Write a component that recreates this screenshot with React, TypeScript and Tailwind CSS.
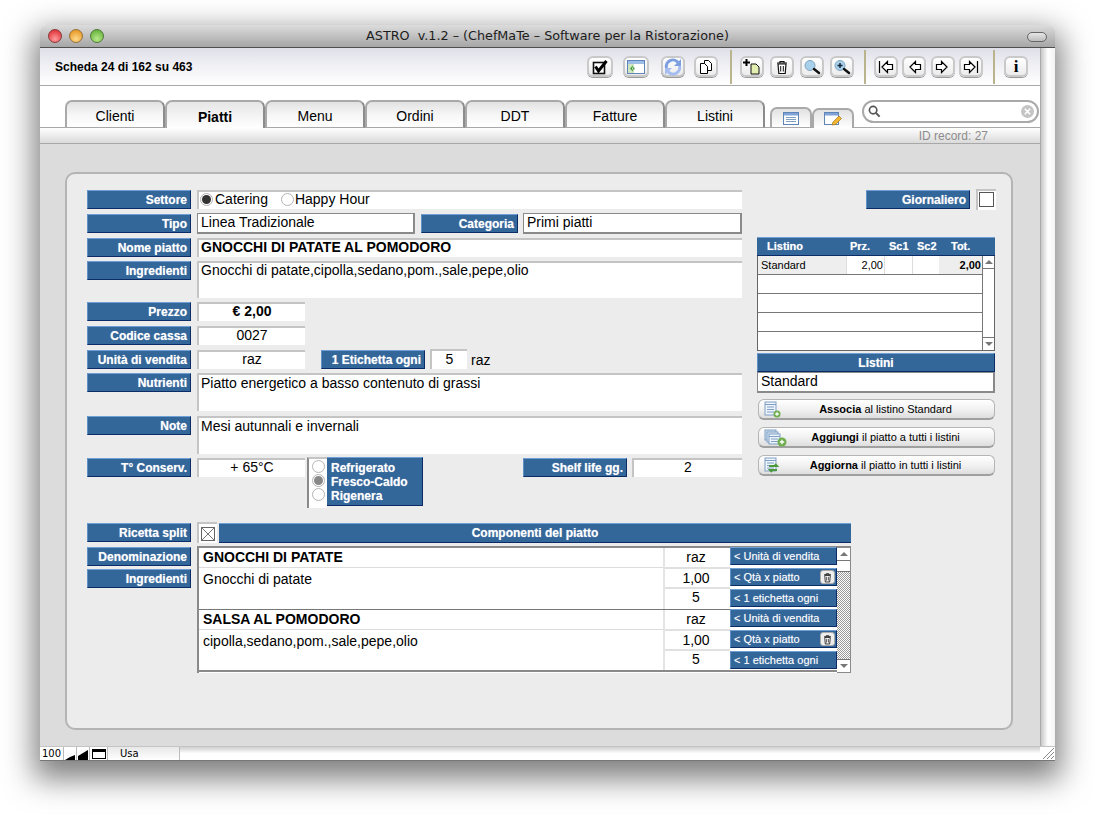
import type { ReactNode } from "react";

const tabs = ["Clienti", "Piatti", "Menu", "Ordini", "DDT", "Fatture", "Listini"];

function Label({ children, className = "w-[104px]" }: { children: ReactNode; className?: string }) {
  return (
    <div
      className={`flex h-[19px] shrink-0 items-center justify-end border-t border-l border-t-[#6f9fd4] border-l-[#5f8fc4] border-b border-r border-b-[#0b2c66] border-r-[#0b2c66] bg-[#336699] pr-[3px] text-[12px] font-bold whitespace-nowrap text-white [text-shadow:0_0_1px_rgba(255,255,255,0.55)] ${className}`}
    >
      {children}
    </div>
  );
}

function Inset({ children, className = "" }: { children?: ReactNode; className?: string }) {
  return (
    <div className={`border-t-2 border-l-2 border-t-[#c4c4c4] border-l-[#c4c4c4] bg-white text-[14px] leading-[15px] text-black ${className}`}>
      {children}
    </div>
  );
}

function Boxed({ children, className = "" }: { children?: ReactNode; className?: string }) {
  return (
    <div className={`border border-r-2 border-b-2 border-[#8a8a8a] bg-white pl-[3px] text-[14px] leading-[17px] text-black ${className}`}>
      {children}
    </div>
  );
}

function Radio({ on, dot = "bg-[#333]" }: { on?: boolean; dot?: string }) {
  return (
    <span className="flex h-[13px] w-[13px] shrink-0 items-center justify-center rounded-full border border-[#b4b4b4] bg-white">
      {on && <span className={`h-[9px] w-[9px] rounded-full ${dot}`} />}
    </span>
  );
}

function ToolButton({ children, className = "" }: { children: ReactNode; className?: string }) {
  return (
    <div
      className={`flex h-[21px] shrink-0 items-center justify-center rounded-[6px] border-2 border-[#c9c9c9] bg-gradient-to-b from-white to-[#ececec] shadow-[0_1px_0_#9a9a9a] ${className}`}
    >
      {children}
    </div>
  );
}

const Sep = ({ className }: { className: string }) => (
  <div className={`h-[34px] w-[2px] shrink-0 bg-[#b9b48c] ${className}`} />
);

function Arrow({ dir, bar }: { dir: "l" | "r"; bar?: boolean }) {
  const flip = dir === "r" ? "-scale-x-100" : "";
  return (
    <svg viewBox="0 0 18 14" className={`h-[14px] w-[18px] ${flip}`}>
      {bar && <path d="M2.5 1v12" stroke="#000" strokeWidth="1.2" />}
      <path d="M5 7l5.5-5.5v3h5v5h-5v3z" fill="#fff" stroke="#000" strokeWidth="1.2" strokeLinejoin="miter" />
    </svg>
  );
}

function Trash({ size = 16 }: { size?: number }) {
  return (
    <svg viewBox="0 0 16 16" width={size} height={size}>
      <path d="M3 4h10M6 4V2.5h4V4" fill="none" stroke="#111" strokeWidth="1.2" />
      <path d="M4 5l.8 9.5h6.4L12 5z" fill="#fff" stroke="#111" strokeWidth="1.2" />
      <path d="M6.7 7v5.5M9.3 7v5.5" stroke="#111" strokeWidth="1" />
    </svg>
  );
}

function Lens({ plus }: { plus?: boolean }) {
  return (
    <svg viewBox="0 0 18 16" className="h-[16px] w-[18px]">
      <circle cx="7" cy="6.5" r="5" fill="#a9d0ea" stroke="#7fa3bd" strokeWidth="1" />
      <path d="M11 10l5 4" stroke="#111" strokeWidth="2.4" strokeLinecap="round" />
      {plus && <path d="M4.5 6.5h5M7 4v5" stroke="#123" strokeWidth="1.4" />}
    </svg>
  );
}

function SheetIcon({ many, sync }: { many?: boolean; sync?: boolean }) {
  return (
    <svg viewBox="0 0 24 18" className="h-[18px] w-[24px]">
      {many && <rect x="1" y="1" width="11" height="10" fill="#cfe0f2" stroke="#7f9fc4" />}
      {many && <rect x="3" y="3" width="11" height="10" fill="#dfeaf6" stroke="#7f9fc4" />}
      <rect x={many ? 5 : 1} y={many ? 5 : 1} width="11" height={many ? 10 : 13} fill="#eef4fb" stroke="#7f9fc4" />
      <path
        d={many ? "M5 7.5h11M7 10h7M7 12.5h7" : "M1 3.5h11M3 6h7M3 8.5h7M3 11h7"}
        stroke="#7f9fc4"
        strokeWidth="1"
      />
      {sync ? (
        <path d="M5 9h8l-2-2M13 13H6l2 2" fill="none" stroke="#4d9a3c" strokeWidth="2" />
      ) : (
        <>
          <circle cx={many ? 18 : 13} cy={many ? 13 : 13} r={many ? 4.5 : 3.5} fill="#6eae4e" />
          <path
            d={many ? "M15.8 13h4.4M18 10.8v4.4" : "M11.2 13h3.6M13 11.2v3.6"}
            stroke="#fff"
            strokeWidth="1.3"
          />
        </>
      )}
    </svg>
  );
}

function ActionButton({ strong, rest, icon }: { strong: string; rest: string; icon: ReactNode }) {
  return (
    <div className="relative ml-px flex h-[21px] w-[237px] items-center justify-center rounded-[6px] border border-[#b5b5b5] border-b-2 border-b-[#a0a0a0] bg-gradient-to-b from-white via-[#f2f2f2] to-[#dedede] pl-[18px] text-[11px] leading-none text-black">
      <span className="absolute top-[1px] left-[5px]">{icon}</span>
      <span>
        <b>{strong}</b> {rest}
      </span>
    </div>
  );
}

function ScrollArrow({ up }: { up?: boolean }) {
  return (
    <div className="flex h-[12px] items-center justify-center bg-white">
      <span
        className={`h-0 w-0 border-x-[4px] border-x-transparent ${up ? "border-b-[4px] border-b-[#777]" : "border-t-[4px] border-t-[#777]"}`}
      />
    </div>
  );
}

function Component({ name, text, last }: { name: string; text: string; last?: boolean }) {
  const qty = ["raz", "1,00", "5"];
  const btns = ["< Unità di vendita", "< Qtà x piatto", "< 1 etichetta ogni"];
  return (
    <div className={`flex h-[62px] ${last ? "border-b-2 border-b-[#8a8a8a]" : "border-b border-b-[#777]"}`}>
      <div className="flex w-[464px] flex-col text-[14px]">
        <div className="flex h-[20px] items-center border-b border-b-[#dcdcdc] pl-[4px] font-bold">{name}</div>
        <div className="pt-[3px] pl-[4px] leading-[16px]">{text}</div>
      </div>
      <div className="flex w-[67px] flex-col border-l-2 border-l-[#e4e4e4] text-center text-[14px]">
        {qty.map((q, i) => (
          <div
            key={q}
            className={`flex h-[20.5px] items-center justify-center pr-[3px] ${i < 2 ? "border-b-2 border-b-[#e0e0e0]" : "pb-[3px]"} ${i === 1 ? "pt-px" : ""}`}
          >
            {q}
          </div>
        ))}
      </div>
      <div className="-mt-px flex h-[62px] w-[107px] flex-col gap-[3px]">
        {btns.map((b, i) => (
          <div
            key={b}
            className="relative flex h-[18px] items-center border-t border-l border-t-[#6f9fd4] border-l-[#5f8fc4] border-b border-r border-b-[#0b2c66] border-r-[#0b2c66] bg-[#336699] pl-[3px] text-[11px] whitespace-nowrap text-white [text-shadow:0_0_1px_rgba(255,255,255,0.4)]"
          >
            {b}
            {i === 1 && (
              <span className="absolute top-[1px] right-[1px] flex h-[14px] w-[15px] items-center justify-center rounded-[3px] border border-[#aaa] bg-[#eee]">
                <Trash size={11} />
              </span>
            )}
          </div>
        ))}
      </div>
    </div>
  );
}

export default function App() {
  return (
    <div className="h-[816px] w-[1095px] overflow-hidden bg-white pt-[25px] pl-[40px] font-['Liberation_Sans',Arial,sans-serif] text-black">
      <div className="flex h-[736px] w-[1015px] flex-col rounded-t-[6px] shadow-[0_12px_30px_6px_rgba(0,0,0,0.5)]">
        {/* title bar */}
        <div className="relative flex h-[23px] shrink-0 items-center justify-center rounded-t-[6px] border-b border-b-[#4f4f4f] bg-gradient-to-b from-[#dcdcdc] to-[#a6a6a6] font-['DejaVu_Sans',sans-serif] text-[12.75px] whitespace-pre text-[#1c1c1c]">
          <div className="absolute top-[4px] left-[8px] flex gap-[7px]">
            <span className="h-[14px] w-[14px] rounded-full border border-[#8a3a3a] bg-[radial-gradient(circle_at_50%_75%,#ff9a9a,#d81e28)]" />
            <span className="h-[14px] w-[14px] rounded-full border border-[#96703a] bg-[radial-gradient(circle_at_50%_75%,#ffd98a,#e08a10)]" />
            <span className="h-[14px] w-[14px] rounded-full border border-[#4f7a3a] bg-[radial-gradient(circle_at_50%_75%,#b8e88a,#55a82c)]" />
          </div>
          ASTRO  v.1.2 – (ChefMaTe – Software per la Ristorazione)
          <span className="absolute top-[7px] right-[8px] h-[10px] w-[20px] rounded-full border border-[#666] bg-gradient-to-b from-[#e6e6e6] to-[#bdbdbd]" />
        </div>

        <div className="flex min-h-0 flex-1">
          <div className="flex w-[1000px] shrink-0 flex-col">
            {/* toolbar */}
            <div className="flex h-[38px] shrink-0 items-center border-b border-b-[#a8a8a8] bg-gradient-to-b from-[#dfdfe9] via-[#f1f1f5] to-white">
              <div className="w-[547px] shrink-0 pl-[15px] text-[12px] font-bold">Scheda 24 di 162 su 463</div>
              <ToolButton className="w-[26px]">
                <svg viewBox="0 0 18 16" className="h-[16px] w-[18px]">
                  <rect x="2.5" y="3.5" width="11" height="11" fill="#fff" stroke="#111" strokeWidth="1.6" />
                  <path d="M4.5 7.5l3 4.5 8-10" fill="none" stroke="#000" strokeWidth="3" />
                </svg>
              </ToolButton>
              <ToolButton className="ml-[10px] w-[26px]">
                <svg viewBox="0 0 18 14" className="h-[14px] w-[18px]">
                  <rect x="0.5" y="0.5" width="17" height="13" fill="#fff" stroke="#5f84b8" />
                  <rect x="1" y="1" width="16" height="3" fill="#9dbde6" />
                  <rect x="1" y="4" width="6" height="9" fill="#cfe5c0" />
                  <path d="M6 5.5L3 8.5l3 3zM5 7.5h2.5v2H5z" fill="#3f9a3a" />
                </svg>
              </ToolButton>
              <ToolButton className="ml-[12px] w-[24px] bg-[#dcdcdc]">
                <svg viewBox="0 0 18 18" className="h-[18px] w-[18px]">
                  <path d="M2.5 10A6.5 6.5 0 0 1 14 4.5" fill="none" stroke="#7d9fe0" strokeWidth="3" />
                  <path d="M17 1v7h-7z" fill="#7d9fe0" />
                  <path d="M15.5 8A6.5 6.5 0 0 1 4 13.5" fill="none" stroke="#a5bdf0" strokeWidth="3" />
                  <path d="M1 17v-7h7z" fill="#a5bdf0" />
                </svg>
              </ToolButton>
              <ToolButton className="ml-[9px] w-[24px]">
                <svg viewBox="0 0 16 16" className="h-[16px] w-[16px]">
                  <path d="M6.5 1.5h4l3 3v7h-7z" fill="#fff" stroke="#000" />
                  <path d="M2.5 4.5h4l3 3v7h-7z" fill="#fff" stroke="#000" />
                </svg>
              </ToolButton>
              <Sep className="ml-[12px]" />
              <ToolButton className="ml-[8px] w-[24px]">
                <svg viewBox="0 0 20 18" className="h-[18px] w-[20px]">
                  <path d="M1 4.5h7M4.5 1v7" stroke="#000" strokeWidth="2" />
                  <path d="M9 6h5l3 3v7H9z" fill="#e3efb0" stroke="#111" />
                </svg>
              </ToolButton>
              <ToolButton className="ml-[6px] w-[24px]">
                <Trash />
              </ToolButton>
              <ToolButton className="ml-[6px] w-[24px] from-[#efefef] to-[#d8d8d8]">
                <Lens />
              </ToolButton>
              <ToolButton className="ml-[6px] w-[24px] from-[#efefef] to-[#d8d8d8]">
                <Lens plus />
              </ToolButton>
              <Sep className="ml-[10px]" />
              <ToolButton className="ml-[8px] w-[24px]">
                <Arrow dir="l" bar />
              </ToolButton>
              <ToolButton className="ml-[4px] w-[24px]">
                <Arrow dir="l" />
              </ToolButton>
              <ToolButton className="ml-[5px] w-[24px]">
                <Arrow dir="r" />
              </ToolButton>
              <ToolButton className="ml-[4px] w-[24px]">
                <Arrow dir="r" bar />
              </ToolButton>
              <Sep className="ml-[10px]" />
              <ToolButton className="ml-[9px] w-[24px] font-['Liberation_Serif',serif] text-[17px] font-bold">i</ToolButton>
            </div>

            {/* tabs */}
            <div className="flex h-[42px] shrink-0 items-end border-b border-b-[#a8a8a8] bg-white pl-[25px]">
              {tabs.map((t) => (
                <div
                  key={t}
                  className={`-mb-px flex h-[28px] w-[100px] items-center justify-center rounded-t-[7px] border-x-2 border-t-2 border-[#a9a9a9] border-r-[#8c8c8c] pt-[4px] text-[14px] ${
                    t === "Piatti"
                      ? "bg-gradient-to-b from-[#e6e6e6] to-white font-bold"
                      : "border-b border-b-[#a8a8a8] bg-gradient-to-b from-[#e2e2e2] via-[#f6f6f6] to-white"
                  }`}
                >
                  {t}
                </div>
              ))}
              <div className="-mb-px ml-[5px] flex h-[21px] w-[42px] items-center justify-center rounded-t-[7px] border-x-2 border-t-2 border-b border-[#a9a9a9] border-b-[#a8a8a8] bg-gradient-to-b from-[#e2e2e2] to-white">
                <svg viewBox="0 0 16 13" className="h-[13px] w-[16px]">
                  <rect x="0.5" y="0.5" width="15" height="12" fill="#fff" stroke="#5f84b8" />
                  <rect x="1" y="1" width="14" height="2.5" fill="#7fa3d6" />
                  <path d="M3 5.5h10M3 7.5h10M3 9.5h10" stroke="#7f9fc4" />
                </svg>
              </div>
              <div className="-mb-px flex h-[20px] w-[42px] items-center justify-center rounded-t-[7px] border-x-2 border-t-2 border-[#a9a9a9] bg-gradient-to-b from-[#e2e2e2] to-white">
                <svg viewBox="0 0 18 14" className="h-[14px] w-[18px]">
                  <rect x="0.5" y="0.5" width="14" height="12" fill="#fff" stroke="#5f84b8" />
                  <rect x="1" y="1" width="13" height="2.5" fill="#7fa3d6" />
                  <path d="M8 13l1-3 6-6 2.5 2.5-6 6z" fill="#f2b632" stroke="#a8761a" strokeWidth="0.7" />
                </svg>
              </div>
              <div className="relative mb-[4px] ml-[8px] flex h-[23px] w-[177px] items-center rounded-full border-2 border-[#a9a9a9] bg-white pl-[4px]">
                <svg viewBox="0 0 14 14" className="h-[13px] w-[13px]">
                  <circle cx="5.5" cy="5.5" r="4" fill="none" stroke="#555" strokeWidth="1.8" />
                  <path d="M8.5 8.5l4 4" stroke="#555" strokeWidth="2.2" />
                </svg>
                <span className="absolute right-[3px] flex h-[13px] w-[13px] items-center justify-center rounded-full bg-[#c4c4c4]">
                  <svg viewBox="0 0 10 10" className="h-[9px] w-[9px]">
                    <path d="M2 2l6 6M8 2l-6 6" stroke="#fff" strokeWidth="1.8" />
                  </svg>
                </span>
              </div>
            </div>

            {/* id strip */}
            <div className="flex h-[16px] shrink-0 items-center justify-end border-b border-b-[#a8a8a8] bg-gradient-to-b from-white to-[#dadada] pr-[52px] text-[12px] text-[#8c8c8c]">
              ID record: 27
            </div>

            {/* main area */}
            <div className="min-h-0 flex-1 bg-[#dcdcdc] pt-[28px] pl-[25px]">
              <div className="h-[558px] w-[948px] rounded-[10px] border-2 border-[#b4b4b4] bg-[#ececec] pt-[16px] pl-[20px]">
                <div className="flex gap-[15px]">
                  {/* left form */}
                  <div className="flex w-[655px] flex-col">
                    <div className="flex gap-[6px]">
                      <Label>Settore</Label>
                      <Inset className="flex h-[19px] flex-1 items-center pb-[3px] pl-[1px]">
                        <Radio on />
                        <span className="ml-[2px]">Catering</span>
                        <span className="ml-[13px]">
                          <Radio />
                        </span>
                        <span className="ml-[1px]">Happy Hour</span>
                      </Inset>
                    </div>
                    <div className="mt-[5px] flex gap-[6px]">
                      <Label>Tipo</Label>
                      <Boxed className="-mt-px -mb-px h-[21px] w-[219px]">Linea Tradizionale</Boxed>
                      <Label className="w-[97px]">Categoria</Label>
                      <Boxed className="-mt-px -mb-px -ml-px h-[21px] w-[220px]">Primi piatti</Boxed>
                    </div>
                    <div className="mt-[5px] flex gap-[6px]">
                      <Label>Nome piatto</Label>
                      <Inset className="h-[19px] flex-1 pl-[2px] font-bold">GNOCCHI DI PATATE AL POMODORO</Inset>
                    </div>
                    <div className="mt-[4px] flex gap-[6px]">
                      <Label>Ingredienti</Label>
                      <Inset className="h-[37px] flex-1 pl-[2px]">Gnocchi di patate,cipolla,sedano,pom.,sale,pepe,olio</Inset>
                    </div>
                    <div className="mt-[4px] flex gap-[6px]">
                      <Label>Prezzo</Label>
                      <Inset className="h-[19px] w-[108px] text-center font-bold">€ 2,00</Inset>
                    </div>
                    <div className="mt-[5px] flex gap-[6px]">
                      <Label>Codice cassa</Label>
                      <Inset className="h-[19px] w-[108px] text-center">0027</Inset>
                    </div>
                    <div className="mt-[5px] flex gap-[6px]">
                      <Label>Unità di vendita</Label>
                      <Inset className="h-[19px] w-[108px] text-center">raz</Inset>
                      <Label className="ml-[10px] w-[104px]">1 Etichetta ogni</Label>
                      <Inset className="-mt-px -ml-px h-[20px] w-[37px] pt-px text-center">5</Inset>
                      <span className="-ml-[2px] pt-[2px] text-[14px] leading-[16px]">raz</span>
                    </div>
                    <div className="mt-[4px] flex gap-[6px]">
                      <Label>Nutrienti</Label>
                      <Inset className="h-[38px] flex-1 pt-px pl-[2px]">Piatto energetico a basso contenuto di grassi</Inset>
                    </div>
                    <div className="mt-[5px] flex gap-[6px]">
                      <Label>Note</Label>
                      <Inset className="h-[38px] flex-1 pt-px pl-[2px]">Mesi autunnali e invernali</Inset>
                    </div>
                    <div className="mt-[4px] flex gap-[6px]">
                      <Label>T° Conserv.</Label>
                      <Inset className="h-[19px] w-[108px] text-center">+ 65°C</Inset>
                      <div className="-mt-px -ml-[4px] flex h-[51px] w-[20px] flex-col items-center gap-[1px] border-t-2 border-l-2 border-t-[#c4c4c4] border-l-[#8a8a8a] bg-white pt-[1px]">
                        <Radio />
                        <Radio on dot="bg-[#888]" />
                        <Radio />
                      </div>
                      <div className="-mt-px -ml-[6px] flex h-[49px] w-[96px] flex-col justify-center border-t border-t-[#6f9fd4] border-r border-b border-r-[#0b2c66] border-b-[#0b2c66] bg-[#336699] pl-[4px] text-[12px] leading-[14px] font-bold text-white [text-shadow:0_0_1px_rgba(255,255,255,0.55)]">
                        <span>Refrigerato</span>
                        <span>Fresco-Caldo</span>
                        <span>Rigenera</span>
                      </div>
                      <Label className="ml-[94px] w-[104px]">Shelf life gg.</Label>
                      <Inset className="-ml-px h-[19px] w-[110px] text-center">2</Inset>
                    </div>
                  </div>

                  {/* right column */}
                  <div className="flex w-[238px] flex-col">
                    <div className="-mr-px flex justify-end gap-[6px]">
                      <Label>Giornaliero</Label>
                      <div className="-mt-px -mb-px flex h-[21px] w-[20px] border-t-2 border-l-2 border-[#c4c4c4] bg-white p-[1px]">
                        <span className="h-[15px] w-[15px] border border-[#555]" />
                      </div>
                    </div>
                    <div className="mt-[28px] grid h-[19px] grid-cols-[83px_39px_28px_34px_auto] items-center border-t border-b border-t-[#6f9fd4] border-b-[#0b2c66] bg-[#336699] pl-[10px] text-[11px] font-bold text-white [text-shadow:0_0_1px_rgba(255,255,255,0.55)]">
                      <span>Listino</span>
                      <span>Prz.</span>
                      <span>Sc1</span>
                      <span>Sc2</span>
                      <span>Tot.</span>
                    </div>
                    <div className="flex w-[238px] border-r border-b border-l border-[#666] bg-white">
                      <div className="flex-1">
                        <div className="grid h-[19px] grid-cols-[88px_38px_28px_27px_43px] border-b border-b-[#777] text-[11px] leading-[18px]">
                          <span className="bg-[#eeeeee] pl-[3px]">Standard</span>
                          <span className="border-l border-l-[#ddd] pr-[1px] text-right">2,00</span>
                          <span className="border-l border-l-[#ddd]" />
                          <span className="border-l border-l-[#ddd]" />
                          <span className="bg-[#eeeeee] pr-[1px] text-right font-bold">2,00</span>
                        </div>
                        <div className="h-[19px] border-b border-b-[#777]" />
                        <div className="h-[19px] border-b border-b-[#777]" />
                        <div className="h-[19px] border-b border-b-[#777]" />
                        <div className="h-[18px]" />
                      </div>
                      <div className="flex w-[12px] flex-col justify-between border-l border-l-[#777]">
                        <div className="border-b border-b-[#777]">
                          <ScrollArrow up />
                        </div>
                        <div className="border-t border-t-[#777]">
                          <ScrollArrow />
                        </div>
                      </div>
                    </div>
                    <div className="mt-[2px]">
                      <Label className="w-full !justify-center !pr-0">Listini</Label>
                    </div>
                    <Boxed className="h-[21px] w-[238px] text-[14px]">Standard</Boxed>
                    <div className="mt-[6px] flex flex-col gap-[7px]">
                      <ActionButton strong="Associa" rest="al listino Standard" icon={<SheetIcon />} />
                      <ActionButton strong="Aggiungi" rest="il piatto a tutti i listini" icon={<SheetIcon many />} />
                      <ActionButton strong="Aggiorna" rest="il piatto in tutti i listini" icon={<SheetIcon sync />} />
                    </div>
                  </div>
                </div>

                {/* components */}
                <div className="mt-[15px] flex gap-[6px]">
                  <div className="flex w-[104px] flex-col gap-[4px]">
                    <div className="mb-px">
                      <Label>Ricetta split</Label>
                    </div>
                    <Label>Denominazione</Label>
                    <div className="-mt-px">
                      <Label>Ingredienti</Label>
                    </div>
                  </div>
                  <div className="flex w-[654px] flex-col">
                    <div className="flex h-[20px] gap-[2px]">
                      <div className="-mt-px flex h-[21px] w-[20px] items-center justify-center border-t-2 border-l-2 border-[#c4c4c4] bg-white">
                        <svg viewBox="0 0 14 14" className="h-[14px] w-[14px]">
                          <rect x="0.5" y="0.5" width="13" height="13" fill="#fff" stroke="#666" />
                          <path d="M1 1l12 12M13 1L1 13" stroke="#666" strokeWidth="0.9" />
                        </svg>
                      </div>
                      <div className="flex flex-1 items-center justify-center border-t border-b border-t-[#6f9fd4] border-b-[#0b2c66] bg-[#336699] text-[12px] font-bold text-white [text-shadow:0_0_1px_rgba(255,255,255,0.55)]">
                        Componenti del piatto
                      </div>
                    </div>
                    <div className="mt-[3px] flex h-[127px] border-t-2 border-l-2 border-t-[#8a8a8a] border-l-[#8a8a8a] bg-white">
                      <div className="w-[638px] shrink-0">
                        <Component name="GNOCCHI DI PATATE" text="Gnocchi di patate" />
                        <Component name="SALSA AL POMODORO" text="cipolla,sedano,pom.,sale,pepe,olio" last />
                      </div>
                      <div className="flex flex-1 flex-col border-r border-b border-[#8a8a8a] bg-white">
                        <ScrollArrow up />
                        <div className="h-[12px] border-y border-y-[#777] bg-white" />
                        <div className="flex-1 bg-[repeating-conic-gradient(#999_0_25%,#fff_0_50%)] bg-[length:2px_2px]" />
                        <div className="border-t border-t-[#777]">
                          <ScrollArrow />
                        </div>
                      </div>
                    </div>
                  </div>
                </div>
              </div>
            </div>
          </div>

          {/* right track */}
          <div className="w-[15px] shrink-0 border-l border-l-[#aaa] bg-gradient-to-r from-[#c8c8c8] via-white to-[#f2f2f2]" />
        </div>

        {/* status bar */}
        <div className="flex h-[15px] shrink-0 border-t border-b border-t-[#c4c4c4] border-b-[#777] bg-gradient-to-b from-[#cfcfcf] via-white to-white font-['DejaVu_Sans',sans-serif] text-[10px] leading-[14px]">
          <div className="w-[24px] border-r border-r-[#bbb] bg-white pl-[2px]">100</div>
          <div className="flex w-[13px] items-end border-r border-r-[#bbb] bg-white">
            <svg viewBox="0 0 12 6" className="h-[6px] w-[12px]">
              <path d="M1 6L6 3l5-2v5z" fill="#000" />
            </svg>
          </div>
          <div className="flex w-[13px] items-end border-r border-r-[#bbb] bg-white">
            <svg viewBox="0 0 12 11" className="h-[11px] w-[12px]">
              <path d="M1 11V7l10-6v10z" fill="#000" />
            </svg>
          </div>
          <div className="flex w-[18px] items-center justify-center border-r border-r-[#bbb] bg-white">
            <span className="h-[10px] w-[14px] border border-t-[3px] border-black" />
          </div>
          <div className="w-[72px] border-r border-r-[#bbb] bg-gradient-to-b from-[#e8e8e8] to-white pl-[12px]">Usa</div>
          <div className="flex-1" />
          <div className="flex w-[15px] items-end justify-end bg-white">
            <svg viewBox="0 0 14 14" className="h-[14px] w-[14px]">
              <path d="M2 13L13 2M6 13l7-7M10 13l3-3" stroke="#888" strokeWidth="1" />
            </svg>
          </div>
        </div>
      </div>
    </div>
  );
}
